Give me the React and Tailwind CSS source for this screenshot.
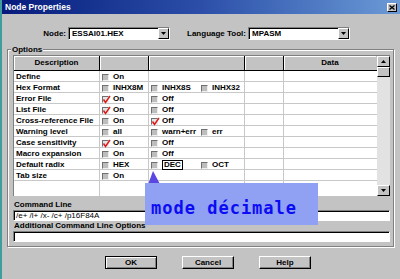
import React from "react";

const rows = [
    { label: "Define", c2: [false, "On"], c3: [] },
    { label: "Hex Format", c2: [false, "INHX8M"], c3: [[false, "INHX8S"], [false, "INHX32"]] },
    { label: "Error File", c2: [true, "On"], c3: [[false, "Off"]] },
    { label: "List File", c2: [true, "On"], c3: [[false, "Off"]] },
    { label: "Cross-reference File", c2: [false, "On"], c3: [[true, "Off"]] },
    { label: "Warning level", c2: [false, "all"], c3: [[false, "warn+err"], [false, "err"]] },
    { label: "Case sensitivity", c2: [true, "On"], c3: [[false, "Off"]] },
    { label: "Macro expansion", c2: [false, "On"], c3: [[false, "Off"]] },
    { label: "Default radix", c2: [false, "HEX"], c3: [[false, "DEC", true], [false, "OCT"]] },
    { label: "Tab size", c2: [false, "On"], c3: [] },
];

const Box = ({ checked }) => (
    <span
        className={`relative block w-[7px] h-[7px] shrink-0 border border-t-[#707070] border-l-[#707070] border-b-[#f0f0f0] border-r-[#f0f0f0] ${
            checked ? "bg-[#e4e4e4]" : "bg-[#bdbdbd]"
        }`}
    >
        {checked && (
            <svg className="absolute left-[-1px] top-[-2px]" width="9" height="9" viewBox="0 0 9 9">
                <path d="M1.5 4.5 L3.5 7.5 L8 1" stroke="#e01818" strokeWidth="1.4" fill="none" />
            </svg>
        )}
    </span>
);

const Opt = ({ data }) => {
    if (!data) return null;
    const [checked, text, focus] = data;
    return (
        <div className="flex items-center gap-[4px]">
            <Box checked={checked} />
            <span className={focus ? "border border-black px-[1px] leading-[8px]" : "leading-[10px]"}>{text}</span>
        </div>
    );
};

const cell = "border-r border-[#c8c8c8] flex items-center";

const Combo = ({ value }) => (
    <div className="w-[102px] h-[13px] bg-white border border-t-[#808080] border-l-[#808080] border-b-white border-r-white shadow-[inset_1px_1px_0_#000] flex items-center justify-between">
        <span className="pl-[3px] leading-[10px]">{value}</span>
        <div className="w-[11px] h-[11px] bg-[#c3c3c3] border border-t-white border-l-white border-b-black border-r-black flex items-center justify-center">
            <svg width="5" height="3" viewBox="0 0 5 3">
                <path d="M0 0 H5 L2.5 3 Z" fill="#000" />
            </svg>
        </div>
    </div>
);

const Btn = ({ label, def }) => (
    <div
        className={`w-[52px] h-[13px] bg-[#c3c3c3] flex items-center justify-center border ${
            def ? "border-black shadow-[inset_1px_1px_0_#fff,inset_-1px_-1px_0_#808080]" : "border-t-white border-l-white border-b-black border-r-black shadow-[inset_-1px_-1px_0_#808080]"
        }`}
    >
        <span className="leading-[10px]">{label}</span>
    </div>
);

const Input = ({ value }) => (
    <div className="h-[11px] bg-white border border-t-[#808080] border-l-[#808080] border-b-white border-r-white shadow-[inset_1px_1px_0_#000] flex items-center">
        <span className="pl-[2px] font-normal leading-[9px]">{value}</span>
    </div>
);

const App = () => {
    return (
        <div className="relative w-[400px] h-[279px] overflow-hidden bg-[#c3c3c3] border-l-2 border-[#3e9e9e] font-['Liberation_Sans',Arial,sans-serif] text-[8px] font-bold text-black">
            {/* title bar */}
            <div className="h-[14px] bg-gradient-to-r from-[#081a7c] via-[#2c4ea8] to-[#6c9ad6] flex items-center justify-between pl-[3px] pr-[3px]">
                <span className="text-white text-[8.5px] leading-[10px]">Node Properties</span>
                <div className="w-[10px] h-[9px] bg-[#c3c3c3] border border-t-white border-l-white border-b-black border-r-black flex items-center justify-center">
                    <svg width="6" height="5" viewBox="0 0 6 5">
                        <path d="M0.5 0.5 L5.5 4.5 M5.5 0.5 L0.5 4.5" stroke="#000" strokeWidth="1.3" />
                    </svg>
                </div>
            </div>

            {/* node / language tool */}
            <div className="flex items-center mt-[13px]">
                <div className="w-[66px] text-right pr-[2px]">Node:</div>
                <Combo value="ESSAI01.HEX" />
                <div className="w-[78px] text-right pr-[2px]">Language Tool:</div>
                <Combo value="MPASM" />
            </div>

            {/* options group */}
            <div className="relative mt-[9px] ml-[5px] mr-[6px] h-[198px] border border-[#808080] shadow-[1px_1px_0_#fff,inset_1px_1px_0_#fff] pt-[5px] pl-[5px] pr-[3px]">
                <span className="absolute left-[3px] top-[-5px] px-[1px] bg-[#c3c3c3] leading-[9px]">Options</span>

                <div className="flex h-[141px]">
                    <div className="flex-1 flex flex-col bg-white border-l border-t border-[#808080]">
                        <div className="grid grid-cols-[86px_49px_96px_39px_92px] h-[15px] border-b border-black bg-[#c3c3c3]">
                            <div className="border-r border-black shadow-[inset_1px_1px_0_#fff] flex items-center justify-center">Description</div>
                            <div className="border-r border-black shadow-[inset_1px_1px_0_#fff]" />
                            <div className="border-r border-black shadow-[inset_1px_1px_0_#fff]" />
                            <div className="border-r border-black shadow-[inset_1px_1px_0_#fff]" />
                            <div className="shadow-[inset_1px_1px_0_#fff] flex items-center justify-center">Data</div>
                        </div>
                        {rows.map((r) => (
                            <div key={r.label} className="grid grid-cols-[86px_49px_96px_39px_92px] h-[11px] border-b border-[#c8c8c8]">
                                <div className={`${cell} pl-[2px]`}>{r.label}</div>
                                <div className={`${cell} pl-[2px]`}>
                                    <Opt data={r.c2} />
                                </div>
                                <div className={`${cell} pl-[2px] grid grid-cols-[50px_1fr]`}>
                                    <Opt data={r.c3[0]} />
                                    <Opt data={r.c3[1]} />
                                </div>
                                <div className={cell} />
                                <div />
                            </div>
                        ))}
                        <div className="flex-1 grid grid-cols-[86px_49px_96px_39px_92px]">
                            <div className="border-r border-[#c8c8c8]" />
                            <div className="border-r border-[#c8c8c8]" />
                            <div className="border-r border-[#c8c8c8]" />
                            <div className="border-r border-[#c8c8c8]" />
                            <div />
                        </div>
                    </div>

                    {/* scrollbar */}
                    <div className="w-[13px] flex flex-col bg-[#e2e2e2] border-t border-[#808080]">
                        <div className="h-[11px] bg-[#c3c3c3] border border-t-white border-l-white border-b-black border-r-black flex items-center justify-center">
                            <svg width="5" height="3" viewBox="0 0 5 3">
                                <path d="M0 3 H5 L2.5 0 Z" fill="#000" />
                            </svg>
                        </div>
                        <div className="h-[10px] bg-[#c3c3c3] border border-t-white border-l-white border-b-black border-r-black" />
                        <div className="flex-1" />
                        <div className="h-[11px] bg-[#c3c3c3] border border-t-white border-l-white border-b-black border-r-black flex items-center justify-center">
                            <svg width="5" height="3" viewBox="0 0 5 3">
                                <path d="M0 0 H5 L2.5 3 Z" fill="#000" />
                            </svg>
                        </div>
                    </div>
                </div>

                <div className="mt-[4px] h-[10px] leading-[10px] pl-[1px]">Command Line</div>
                <Input value="/e+ /l+ /x- /c+ /p16F84A" />
                <div className="h-[10px] leading-[10px] pl-[1px]">Additional Command Line Options</div>
                <Input value="" />
            </div>

            {/* buttons */}
            <div className="flex mt-[9px] ml-[103px] gap-[25px]">
                <Btn label="OK" def />
                <Btn label="Cancel" />
                <Btn label="Help" />
            </div>

            {/* annotation */}
            <svg className="absolute left-[140px] top-[166px]" width="30" height="40" viewBox="0 0 30 40">
                <path d="M11 5 L4 24 L19 20 Z" fill="#5a46e0" />
                <path d="M12 18 L21 33" stroke="#5a46e0" strokeWidth="2.5" />
            </svg>
            <div className="absolute left-[143px] top-[183px] w-[173px] h-[42px] bg-[#90a0f2] pl-[6px] pt-[15px]">
                <span className="font-['DejaVu_Sans_Mono',monospace] font-bold text-[17px] leading-[20px] tracking-[1px] text-[#0c0cf4]">
                    mode décimale
                </span>
            </div>
        </div>
    );
};

export default App;
